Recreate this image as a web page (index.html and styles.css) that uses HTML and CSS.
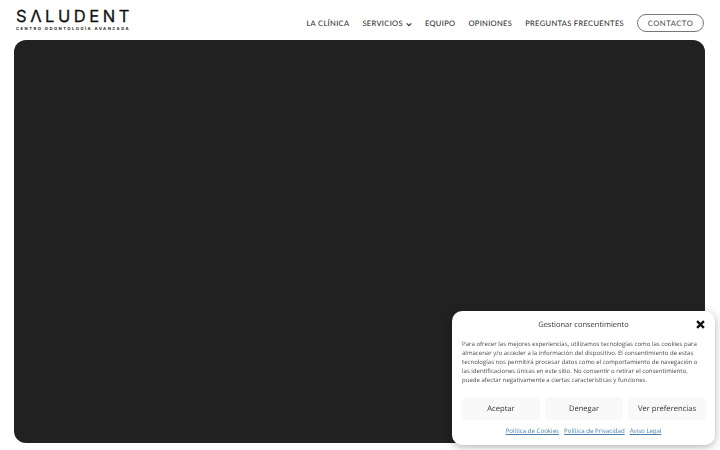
FILE: index.html
```html
<!DOCTYPE html>
<html lang="es">
<head>
<meta charset="utf-8">
<title>Saludent</title>
<link rel="stylesheet" href="styles.css">
</head>
<body>
<header class="header">
  <a class="logo" href="#" aria-label="Saludent">
    <span class="logo-name">SΛLUDENT</span>
    <span class="logo-sub">CENTRO ODONTOLOGÍA AVANZADA</span>
  </a>
  <nav class="nav">
    <a href="#">LA CLÍNICA</a>
    <a href="#" class="has-sub">SERVICIOS
      <svg class="chev" viewBox="0 0 8 6" width="6" height="5"><path d="M1 1.5 4 4.5 7 1.5" fill="none" stroke="#333" stroke-width="1.5"/></svg>
    </a>
    <a href="#">EQUIPO</a>
    <a href="#">OPINIONES</a>
    <a href="#">PREGUNTAS FRECUENTES</a>
    <a href="#" class="cta">CONTACTO</a>
  </nav>
</header>
<main class="hero"></main>
<aside class="consent">
  <div class="consent-head">
    <span class="consent-title">Gestionar consentimiento</span>
    <svg class="close" viewBox="0 0 10 10" width="9" height="9"><path d="M1.2 1.2 8.8 8.8M8.8 1.2 1.2 8.8" fill="none" stroke="#111" stroke-width="2.6"/></svg>
  </div>
  <p class="consent-text">Para ofrecer las mejores experiencias, utilizamos tecnologías como las cookies para almacenar y/o acceder a la información del dispositivo. El consentimiento de estas tecnologías nos permitirá procesar datos como el comportamiento de navegación o las identificaciones únicas en este sitio. No consentir o retirar el consentimiento, puede afectar negativamente a ciertas características y funciones.</p>
  <div class="consent-btns">
    <button>Aceptar</button>
    <button>Denegar</button>
    <button>Ver preferencias</button>
  </div>
  <div class="consent-links">
    <a href="#">Política de Cookies</a>
    <a href="#">Política de Privacidad</a>
    <a href="#">Aviso Legal</a>
  </div>
</aside>
</body>
</html>
```
FILE: styles.css
```css
* { box-sizing: border-box; }
html, body { margin: 0; height: 100%; }
body { width: 720px; height: 450px; overflow: hidden; background: #fff; font-family: "Open Sans", sans-serif; text-rendering: geometricPrecision; }
a { text-decoration: none; color: inherit; }

.header { height: 40px; display: flex; justify-content: space-between; align-items: flex-start; padding: 0 16px; }
.logo { display: flex; flex-direction: column; padding-top: 9px; }
.logo-name { font: 400 16.5px/14px "Inter", sans-serif; letter-spacing: 3.55px; color: #111; -webkit-text-stroke: .3px #111; white-space: nowrap; }
.logo-sub { font: 700 4.2px/6px "Inter", sans-serif; letter-spacing: 1.45px; color: #222; margin-top: 3.5px; white-space: nowrap; }

.nav { display: flex; align-items: center; gap: 13px; height: 32px; margin-top: 7px; font: 400 7.6px/1 "Lato", sans-serif; letter-spacing: .3px; color: #222; }
.nav a { padding-top: 1px; }
.has-sub { display: flex; align-items: center; gap: 3px; }
.chev { margin-top: 1px; }
.nav .cta { height: 18px; width: 67px; border: 1px solid #777; border-radius: 9px; display: flex; align-items: center; justify-content: center; color: #444; letter-spacing: .55px; }

.hero { height: 403px; margin: 0 15px 0 14px; background: #212121; border-radius: 12px; }

.consent { position: fixed; left: 452px; top: 311px; width: 263px; height: 134px; padding: 0 10px; background: #fff; border-radius: 10px; box-shadow: 0 2px 8px rgba(0,0,0,.3); color: #333; }
.consent-head { position: relative; height: 20px; display: flex; align-items: flex-end; justify-content: center; }
.consent-title { font-size: 7.5px; line-height: 12px; color: #333; }
.close { position: absolute; right: 0; bottom: 2.5px; }
.consent-text { margin: 9px 0 0; font-size: 6.05px; line-height: 9px; color: #4a4a4a; }
.consent-btns { display: grid; grid-template-columns: 78px 78px 78px; gap: 5px; margin-top: 12px; }
.consent-btns button { height: 23px; padding: 0; border: 0; border-radius: 4px; background: #f9f9f9; font: 400 7.6px "Open Sans", sans-serif; color: #333; text-rendering: geometricPrecision; }
.consent-links { display: flex; justify-content: center; gap: 5px; margin-top: 6px; font-size: 6.15px; line-height: 9px; color: #4a7fad; }
.consent-links a { text-decoration: underline; }
```
